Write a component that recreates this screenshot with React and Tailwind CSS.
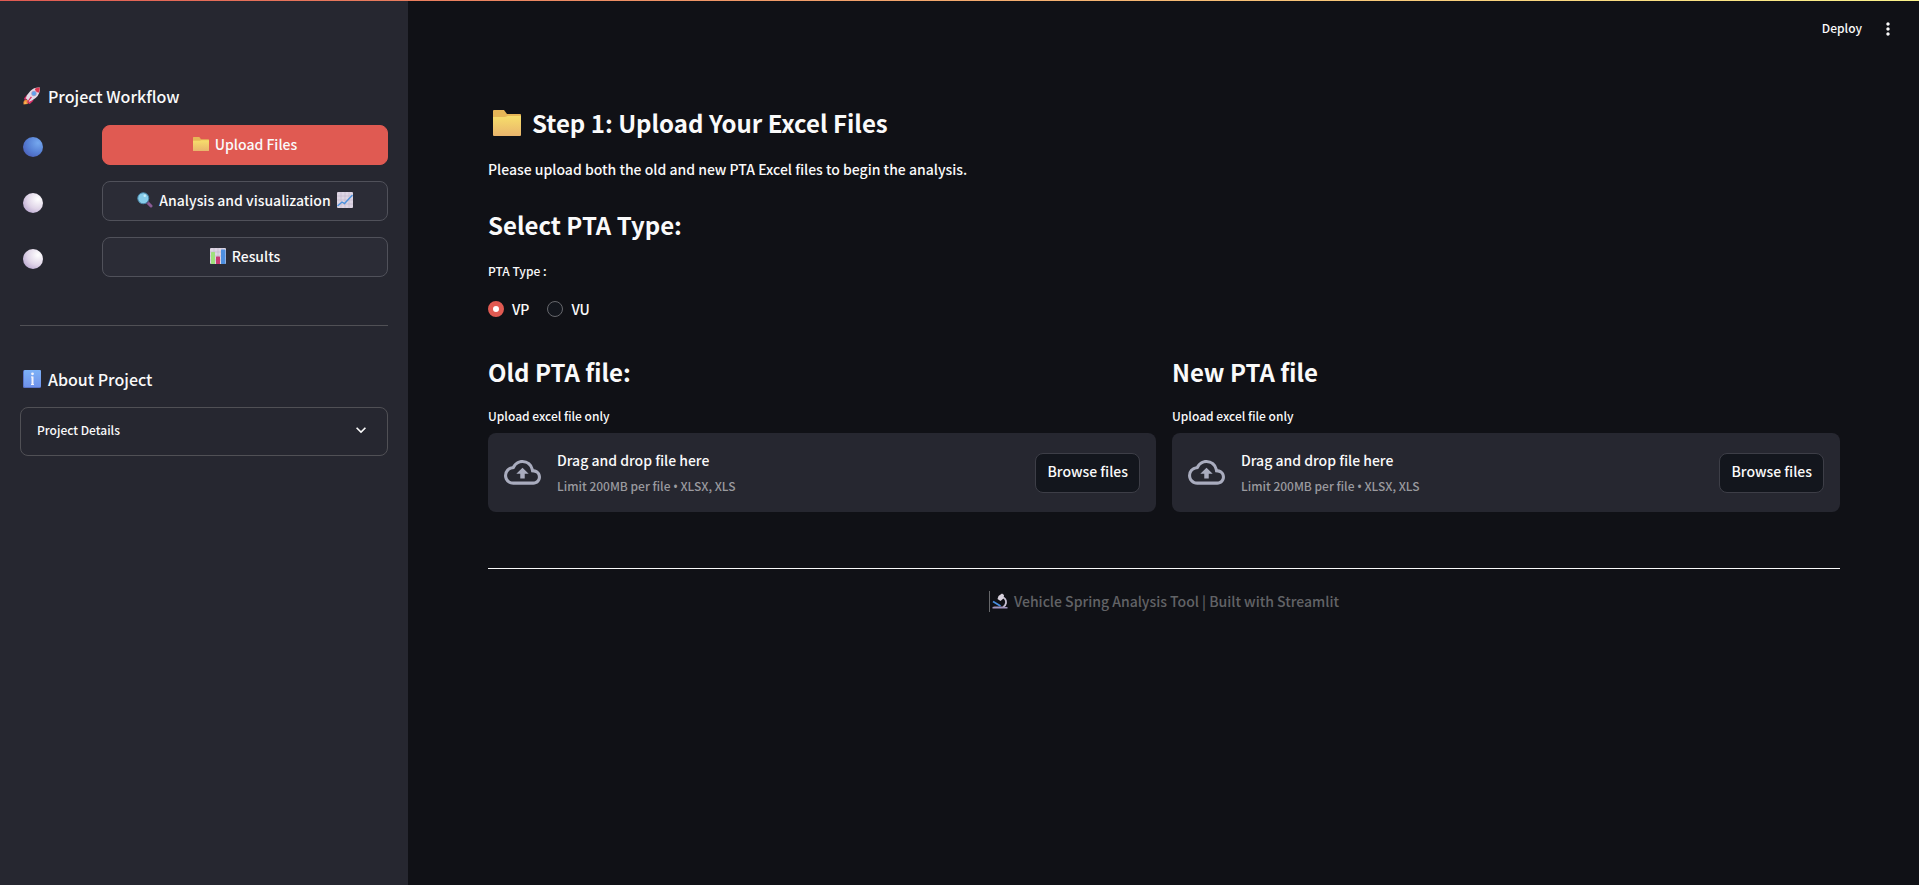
import React, { useRef, useState } from "react";
import { MdMoreVert, MdExpandMore } from "react-icons/md";

function Rocket({ className }) {
  return (
    <svg viewBox="0 0 32 32" className={className} aria-hidden="true">
      <path d="M8 13l-6 7 1 3 7-2z" fill="#e0316b" />
      <path d="M19 24l-7 6-3-1 2-7z" fill="#e0316b" />
      <path d="M2 24q5-3 7 0 2 4-1 6l-7 1q-1-4 1-7z" fill="#ee8a3a" />
      <path d="M3 26q3-1 4 1 0 2-2 3l-3 0z" fill="#f9b850" />
      <path d="M30 1q1 11-7 18-6 5-12 7l-6-6q2-7 8-13 7-7 17-6z" fill="#e3dae6" />
      <path d="M30 1q0 5-2 9-6-1-7-7 4-2 9-2z" fill="#dc3550" />
      <circle cx="19.500" cy="11.500" r="4.800" fill="#a99fc4" />
      <circle cx="19.500" cy="11.500" r="3.400" fill="#5da2ee" />
      <path d="M14 17l2 1-8 10-2 0z" fill="#e0316b" />
    </svg>
  );
}

function Folder({ className }) {
  return (
    <svg viewBox="0 0 28 26" preserveAspectRatio="none" className={className} aria-hidden="true">
      <defs>
        <linearGradient id="folderFront" x1="0" y1="0" x2="0" y2="1">
          <stop offset="0" stopColor="#f7de6b" />
          <stop offset="1" stopColor="#e9b56c" />
        </linearGradient>
      </defs>
      <path d="M1 0h10l3 4h13q1 0 1 1v5H0V1q0-1 1-1z" fill="#e6b657" />
      <path d="M0 7h12l3-1h13v19q0 1-1 1H1q-1 0-1-1z" fill="url(#folderFront)" />
    </svg>
  );
}

function Magnifier({ className }) {
  return (
    <svg viewBox="0 0 32 32" className={className} aria-hidden="true">
      <path d="M19 19l9 9" stroke="#8a5b94" strokeWidth="6" strokeLinecap="round" />
      <path d="M18 18l4 4" stroke="#5a4674" strokeWidth="4" />
      <circle cx="12.500" cy="12.500" r="11" fill="#87cdea" stroke="#4a86a8" strokeWidth="2" />
      <circle cx="15.500" cy="7.500" r="2.500" fill="#c9f0fa" />
    </svg>
  );
}

function ChartGrid() {
  return (
    <>
      <rect width="32" height="32" rx="2" fill="#ddd5e3" />
      <path d="M0 8h32M0 16h32M0 24h32M8 0v32M16 0v32M24 0v32" stroke="#b9afc6" strokeWidth="1" />
    </>
  );
}

function LineChart({ className }) {
  return (
    <svg viewBox="0 0 32 32" className={className} aria-hidden="true">
      <ChartGrid />
      <path d="M1 28l9-8 5 3L31 6" fill="none" stroke="#4a90dc" strokeWidth="2.800" />
    </svg>
  );
}

function BarChart({ className }) {
  return (
    <svg viewBox="0 0 32 32" className={className} aria-hidden="true">
      <ChartGrid />
      <rect x="2" y="8" width="8" height="24" rx="1" fill="#9fe07c" />
      <rect x="12" y="17" width="8" height="15" rx="1" fill="#c93a72" />
      <rect x="22" y="3" width="9" height="29" rx="1" fill="#4d8fe0" />
    </svg>
  );
}

function Info({ className }) {
  return (
    <svg viewBox="0 0 18 18" className={className} aria-hidden="true">
      <defs>
        <linearGradient id="infoFill" x1="0" y1="0" x2="0" y2="1">
          <stop offset="0" stopColor="#7db2f7" />
          <stop offset="1" stopColor="#6f92ea" />
        </linearGradient>
      </defs>
      <rect width="18" height="18" rx="1.500" fill="#5a74c8" />
      <rect x="1" width="17" height="17" rx="1.200" fill="url(#infoFill)" />
      <circle cx="9.500" cy="3.800" r="1.400" fill="#f2f2fb" />
      <path d="M9.500 6.500v8.500" stroke="#f2f2fb" strokeWidth="2" fill="none" />
      <path d="M8 7h1.500M8 14.500h3" stroke="#f2f2fb" strokeWidth="1" fill="none" />
    </svg>
  );
}

function Microscope({ className }) {
  return (
    <svg viewBox="0 0 32 32" className={className} aria-hidden="true">
      <path d="M20 8q9 3 8 12-1 6-6 8" fill="none" stroke="#c9c2d4" strokeWidth="3.600" />
      <path d="M13 6l7-5 4 3-1 7-6 5-6-4z" fill="#d8d2de" />
      <path d="M2 17l15 9" stroke="#4a8fe0" strokeWidth="3.400" />
      <path d="M5 27h18l3 1h5v3H1v-3z" fill="#a094bb" />
    </svg>
  );
}

function CloudUpload({ className }) {
  return (
    <svg viewBox="0 0 24 16" className={className} fill="currentColor" aria-hidden="true">
      <path
        transform="translate(0 -4)"
        d="M19.350 10.040A7.490 7.490 0 0 0 12 4C9.110 4 6.600 5.640 5.350 8.040A5.994 5.994 0 0 0 0 14c0 3.310 2.690 6 6 6h13c2.760 0 5-2.240 5-5 0-2.640-2.050-4.780-4.650-4.960zM19 18H6c-2.210 0-4-1.790-4-4 0-2.050 1.530-3.760 3.560-3.970l1.070-.110.500-.950A5.469 5.469 0 0 1 12 6c2.620 0 4.880 1.860 5.390 4.430l.300 1.500 1.530.110A2.980 2.980 0 0 1 22 15c0 1.650-1.350 3-3 3zM8 13h2.550v3h2.900v-3H16l-4-4z"
      />
    </svg>
  );
}

function StatusDot({ active }) {
  return (
    <span
      className={
        active
          ? "size-5 rounded-full bg-radial-[at_75%_30%] from-[#75a8ee] via-[#567fd4] to-[#4650ac]"
          : "size-5 rounded-full bg-radial-[at_75%_30%] from-white via-[#e0d5e8] to-[#a893c4]"
      }
    />
  );
}

function Step({ active, onClick, children }) {
  return (
    <div className="flex items-center gap-[59px]">
      <span className="flex pt-1 pl-[3px]">
        <StatusDot active={active} />
      </span>
      <button
        type="button"
        onClick={onClick}
        className={
          active
            ? "flex h-10 flex-1 items-center justify-center gap-1.5 rounded-lg border border-[#e05a52] bg-[#e05a52] pb-0.5 text-[14px]"
            : "flex h-10 flex-1 items-center justify-center gap-1.5 rounded-lg border border-[#50515a] bg-[#2b2c36] pb-0.5 text-[14px]"
        }
      >
        {children}
      </button>
    </div>
  );
}

function Heading({ children }) {
  return <h2 className="flex items-center text-[24px] leading-8 font-bold">{children}</h2>;
}

function Uploader({ id, title }) {
  const input = useRef(null);
  return (
    <section className="min-w-0 flex-1">
      <Heading>{title}</Heading>
      <label htmlFor={id} className="mt-[18px] mb-[7px] block text-[12px] leading-5">
        Upload excel file only
      </label>
      <div className="flex items-center rounded-lg bg-[#262730] px-4 py-[15px]">
        <CloudUpload className="w-[37px] text-[#a9acbe]" />
        <div className="ml-4 flex-1">
          <p className="text-[14px] leading-6">Drag and drop file here</p>
          <p className="pt-0.5 text-[12px] leading-[23px] text-[#9a9a9f]">
            Limit 200MB per file <span className="font-['Noto_Sans'] leading-4">•</span> XLSX, XLS
          </p>
        </div>
        <input ref={input} id={id} type="file" accept=".xlsx,.xls" className="hidden" />
        <button
          type="button"
          onClick={() => input.current.click()}
          className="h-10 rounded-lg border border-[#3d3e47] bg-[#13161d] px-[11px] pb-0.5 text-[14px]"
        >
          Browse files
        </button>
      </div>
    </section>
  );
}

function TypeOption({ value, current, onSelect }) {
  return (
    <label className="flex items-center gap-2 text-[14px] leading-6">
      <input
        type="radio"
        name="pta-type"
        value={value}
        checked={current === value}
        onChange={() => onSelect(value)}
        className="size-4 appearance-none rounded-full border border-[#66676c] bg-[#13161d] checked:border-5 checked:border-[#e05a52] checked:bg-white"
      />
      {value}
    </label>
  );
}

export default function App() {
  const [step, setStep] = useState(0);
  const [type, setType] = useState("VP");
  const [open, setOpen] = useState(false);

  return (
    <div className="flex min-h-screen flex-col bg-[#101116] font-['Noto_Sans_CJK_SC','Noto_Sans',sans-serif] font-medium text-[#fafafa]">
      <div className="h-px bg-linear-to-r from-[#e05a52] to-[#fbf38a]" />
      <div className="flex flex-1">
        <aside className="w-[408px] shrink-0 bg-[#262730] px-5 pt-[83px]">
          <h3 className="mb-[17px] flex items-center gap-[7px] pl-[3px] text-[16px] leading-6 font-medium">
            <Rocket className="size-[18px]" />
            Project Workflow
          </h3>
          <nav className="flex flex-col gap-4">
            <Step active={step === 0} onClick={() => setStep(0)}>
              <Folder className="h-3.5 w-4" />
              Upload Files
            </Step>
            <Step active={step === 1} onClick={() => setStep(1)}>
              <Magnifier className="size-4" />
              Analysis and visualization
              <LineChart className="size-4" />
            </Step>
            <Step active={step === 2} onClick={() => setStep(2)}>
              <BarChart className="size-4" />
              Results
            </Step>
          </nav>
          <hr className="mt-12 mb-[41px] border-[#505055]" />
          <h3 className="mb-4 flex items-center gap-[7px] pl-[3px] text-[16px] leading-6 font-medium">
            <Info className="size-[18px]" />
            About Project
          </h3>
          <button
            type="button"
            aria-expanded={open}
            onClick={() => setOpen(!open)}
            className="flex h-[49px] w-full items-center justify-between rounded-lg border border-[#505055] px-4 pb-1 text-[12px]"
          >
            Project Details
            <MdExpandMore className="size-5" />
          </button>
        </aside>

        <div className="flex min-w-0 flex-1 flex-col">
          <header className="flex h-[54px] items-center justify-end gap-4 pr-[21px]">
            <button type="button" className="text-[12px]">
              Deploy
            </button>
            <button type="button" aria-label="Menu" className="pt-0.5">
              <MdMoreVert className="size-5" />
            </button>
          </header>

          <main className="pt-[52px] pr-[79px] pl-20">
            <Heading>
              <Folder className="mr-[11px] ml-[5px] h-[26px] w-7" />
              Step 1: Upload Your Excel Files
            </Heading>
            <p className="mt-[18px] text-[14px] leading-6">
              Please upload both the old and new PTA Excel files to begin the analysis.
            </p>
            <div className="mt-7">
              <Heading>Select PTA Type:</Heading>
            </div>
            <fieldset className="mt-5">
              <legend className="text-[12px] leading-5">PTA Type :</legend>
              <div className="mt-4 flex gap-[18px]">
                <TypeOption value="VP" current={type} onSelect={setType} />
                <TypeOption value="VU" current={type} onSelect={setType} />
              </div>
            </fieldset>
            <div className="mt-[35px] flex gap-4">
              <Uploader id="old-file" title="Old PTA file:" />
              <Uploader id="new-file" title="New PTA file" />
            </div>
            <hr className="mt-14 border-[#fafafa]" />
            <footer className="mt-5 flex items-center justify-center text-[14px] leading-6 text-[#626366]">
              <span className="mr-0.5 h-[21px] w-px bg-[#66676a]" />
              <Microscope className="mr-1.5 size-4" />
              Vehicle Spring Analysis Tool | Built with Streamlit
            </footer>
          </main>
        </div>
      </div>
    </div>
  );
}
